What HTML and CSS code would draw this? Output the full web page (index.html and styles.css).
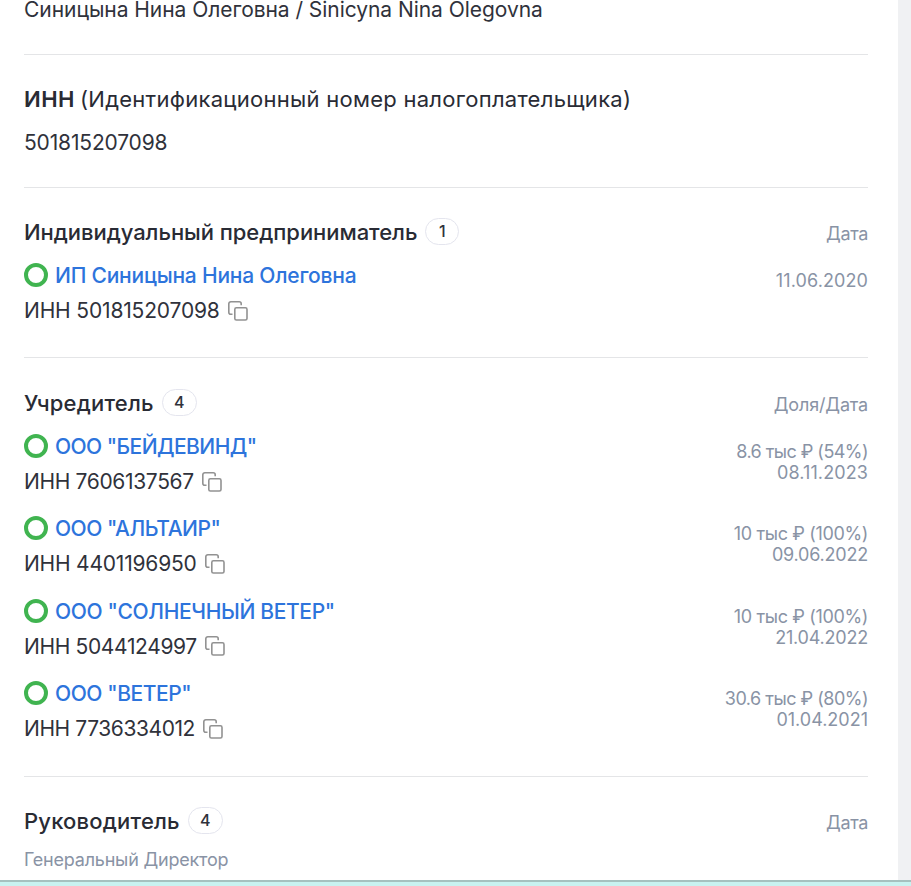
FILE: index.html
```
<!DOCTYPE html>
<html lang="ru">
<head>
<meta charset="utf-8">
<title>Синицына Нина Олеговна</title>
<link rel="stylesheet" href="styles.css">
</head>
<body>
<svg class="defs" aria-hidden="true"><symbol id="copy" viewBox="0 0 20 20"><path d="M4.5 13.2H2.8A2 2 0 0 1 .8 11.2V2.8a2 2 0 0 1 2-2h8.4a2 2 0 0 1 2 2V4.2"/><rect x="6.8" y="6.8" width="12.2" height="12.2" rx="1.6"/></symbol></svg>
<div class="page">
<main class="card">
  <section class="section person"><div class="value tight-05">Синицына Нина Олеговна / Sinicyna Nina Olegovna</div></section>
  <section class="section tax">
    <h2 class="title"><span class="abbr">ИНН</span><span class="regular">(Идентификационный номер налогоплательщика)</span></h2>
    <div class="value tight-15">501815207098</div>
  </section>
  <section class="section entrepreneur">
    <header class="head"><h2 class="title tight-05">Индивидуальный предприниматель</h2><span class="badge narrow">1</span><span class="side tight-35">Дата</span></header>
    <article class="item">
      <div><a class="name tight-20"><i class="ring"></i>ИП Синицына Нина Олеговна</a>
      <div class="inn"><span class="tight-15">ИНН 501815207098</span><svg class="copy"><use href="#copy"/></svg></div></div>
      <div class="side details"><span class="wide-10">11.06.2020</span></div>
    </article>
  </section>
  <section class="section founders">
    <header class="head"><h2 class="title wide-20">Учредитель</h2><span class="badge">4</span><span class="side tight-15">Доля/Дата</span></header>
    <article class="item">
      <div><a class="name tight-55"><i class="ring"></i>ООО "БЕЙДЕВИНД"</a>
      <div class="inn"><span class="tight-35">ИНН 7606137567</span><svg class="copy"><use href="#copy"/></svg></div></div>
      <div class="side details"><span class="tight-55">8.6 тыс ₽ (54%)</span><span class="wide-10">08.11.2023</span></div>
    </article>
    <article class="item">
      <div><a class="name tight-50"><i class="ring"></i>ООО "АЛЬТАИР"</a>
      <div class="inn"><span class="tight-20">ИНН 4401196950</span><svg class="copy"><use href="#copy"/></svg></div></div>
      <div class="side details"><span class="tight-35">10 тыс ₽ (100%)</span><span class="tight-20">09.06.2022</span></div>
    </article>
    <article class="item">
      <div><a class="name tight-35"><i class="ring"></i>ООО "СОЛНЕЧНЫЙ ВЕТЕР"</a>
      <div class="inn"><span class="tight-35">ИНН 5044124997</span><svg class="copy"><use href="#copy"/></svg></div></div>
      <div class="side details"><span class="tight-35">10 тыс ₽ (100%)</span><span class="tight-20">21.04.2022</span></div>
    </article>
    <article class="item">
      <div><a class="name tight-42"><i class="ring"></i>ООО "ВЕТЕР"</a>
      <div class="inn"><span class="tight-42">ИНН 7736334012</span><svg class="copy"><use href="#copy"/></svg></div></div>
      <div class="side details"><span class="tight-50">30.6 тыс ₽ (80%)</span><span>01.04.2021</span></div>
    </article>
  </section>
  <section class="section managers">
    <header class="head"><h2 class="title wide-20">Руководитель</h2><span class="badge">4</span><span class="side tight-35">Дата</span></header>
    <div class="role tight-20">Генеральный Директор</div>
  </section>
</main>
<footer class="strip"></footer>
</div>
</body>
</html>
```
FILE: styles.css
```
* { box-sizing: border-box; }
body { margin: 0; background: #f0f1f3; color: #30323b; font: 21px/35px Inter, sans-serif; overflow: hidden; }
.defs { display: none; }
.page { height: 886px; display: flex; flex-direction: column; }
.card { width: 898px; height: 880px; flex: none; overflow: hidden; padding: 0 30px 0 24px; background: #fff; }
.strip { flex: 1; border-top: 2px solid #a5c1bf; background: #c8f2f0; }
.section { border-bottom: 1px solid #e4e5e7; }
.section:last-child { border: 0; }
.person { height: 55px; }
.person .value { line-height: 20px; }
.tax { height: 133px; padding-top: 23px; }
.tax .title { height: 47px; line-height: 43px; }
.abbr { font-weight: 600; letter-spacing: .5px; margin-right: 5px; }
.regular { font-weight: 400; letter-spacing: .27px; }
.entrepreneur { height: 170px; padding-top: 23px; }
.founders { height: 419px; padding-top: 24px; }
.managers { padding-top: 23px; }
.head { height: 42px; display: flex; align-items: center; }
.title { margin: 0; font-size: 22px; font-weight: 500; line-height: 42px; color: #292b34; white-space: nowrap; }
.badge { width: 35px; height: 27px; margin: 0 0 2px 8px; border: 1px solid #e4e5ee; border-radius: 14px; text-align: center; font-size: 16px; line-height: 25px; font-weight: 500; }
.badge.narrow { width: 34px; }
.side { color: #8993a5; font-size: 18px; line-height: 21px; white-space: nowrap; }
.head .side { margin: 3px 0 0 auto; }
.head + .item { margin-top: 5px; }
.item { display: flex; justify-content: space-between; height: 70px; margin-bottom: 12.4px; }
.name { display: flex; align-items: center; gap: 7px; height: 35px; color: #2d74dc; font-weight: 500; white-space: nowrap; }
.ring { width: 24px; height: 24px; margin-bottom: 1px; border: 4px solid #40b450; border-radius: 50%; }
.inn { display: flex; align-items: center; gap: 8px; }
.copy { width: 20px; height: 20px; fill: none; stroke: #929292; stroke-width: 1.6; }
.details { display: flex; flex-direction: column; align-items: flex-end; padding-top: 12px; }
.role { color: #8993a5; font-size: 18px; line-height: 35px; }
.tight-05 { letter-spacing: -.05px; }
.tight-15 { letter-spacing: -.16px; }
.tight-20 { letter-spacing: -.21px; }
.tight-35 { letter-spacing: -.35px; }
.tight-42 { letter-spacing: -.42px; }
.tight-50 { letter-spacing: -.5px; }
.tight-55 { letter-spacing: -.55px; }
.wide-10 { letter-spacing: .1px; }
.wide-20 { letter-spacing: .2px; }
```
